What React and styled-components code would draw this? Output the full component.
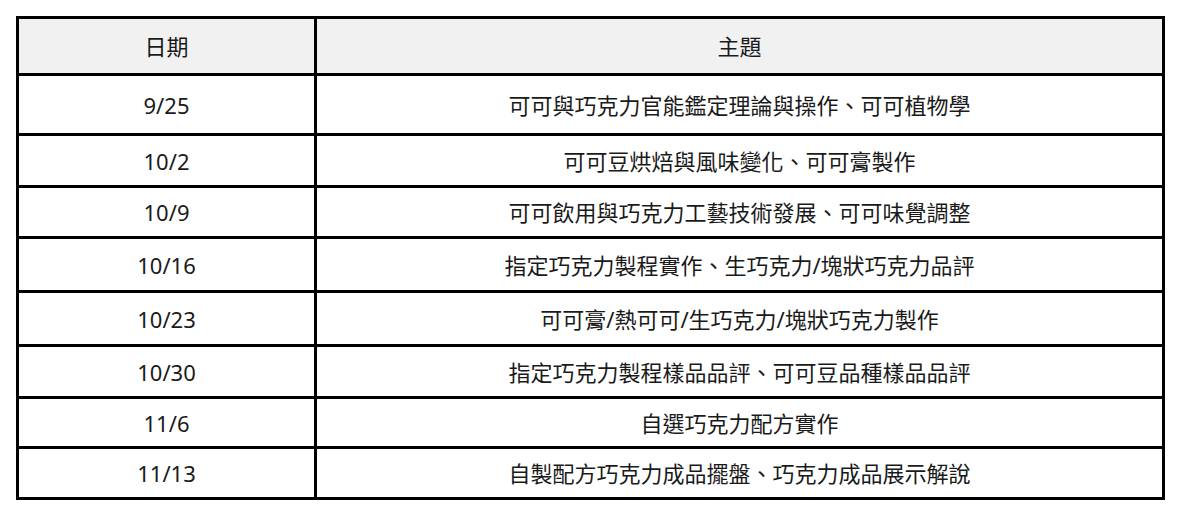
import React from 'react';
import styled, { createGlobalStyle } from 'styled-components';

const GlobalStyle = createGlobalStyle`
    body {
        margin: 0;
        padding: 16px;
        background: #ffffff;
        font-family: "Noto Sans", "Noto Sans CJK TC", sans-serif;
    }
`;

const schedule = [
    { date: '9/25', topic: '可可與巧克力官能鑑定理論與操作、可可植物學', height: 57 },
    { date: '10/2', topic: '可可豆烘焙與風味變化、可可膏製作', height: 49 },
    { date: '10/9', topic: '可可飲用與巧克力工藝技術發展、可可味覺調整', height: 48 },
    { date: '10/16', topic: '指定巧克力製程實作、生巧克力/塊狀巧克力品評', height: 51 },
    { date: '10/23', topic: '可可膏/熱可可/生巧克力/塊狀巧克力製作', height: 51 },
    { date: '10/30', topic: '指定巧克力製程樣品品評、可可豆品種樣品品評', height: 49 },
    { date: '11/6', topic: '自選巧克力配方實作', height: 47 },
    { date: '11/13', topic: '自製配方巧克力成品擺盤、巧克力成品展示解說', height: 48 },
];

function App() {
    return (
        <>
            <GlobalStyle />
            <Table>
                <Row $height={54}>
                    <Cell $head>日期</Cell>
                    <Cell $head>主題</Cell>
                </Row>
                {schedule.map((item) => (
                    <Row key={item.date} $height={item.height}>
                        <Cell>{item.date}</Cell>
                        <Cell>{item.topic}</Cell>
                    </Row>
                ))}
            </Table>
        </>
    );
}

const Table = styled.div`
    width: 1149px;
    box-sizing: border-box;
    display: flex;
    flex-direction: column;
    gap: 3px;
    padding: 3px;
    background: #000000;
`;

const Row = styled.div`
    display: grid;
    grid-template-columns: 295px 1fr;
    gap: 3px;
    height: ${(p) => p.$height}px;
`;

const Cell = styled.div`
    display: flex;
    align-items: center;
    justify-content: center;
    background: ${(p) => (p.$head ? '#f1f1f1' : '#ffffff')};
    color: #1a1a1a;
    font-size: 22px;
    line-height: 1;
    box-sizing: border-box;
`;

export default App;
